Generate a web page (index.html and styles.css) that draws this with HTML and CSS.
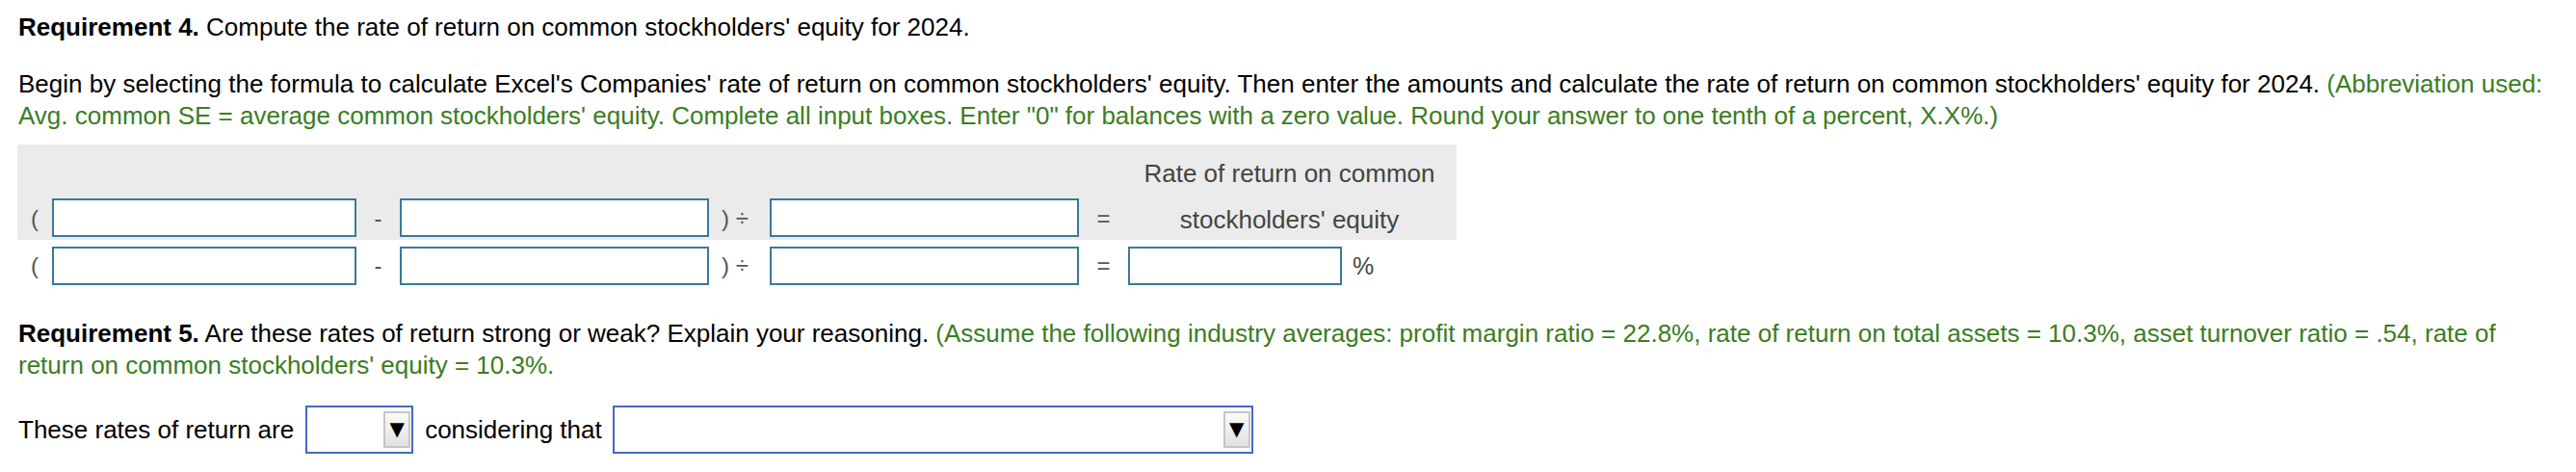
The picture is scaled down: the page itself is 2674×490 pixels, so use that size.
FILE: index.html
```html
<!DOCTYPE html>
<html>
<head>
<meta charset="utf-8">
<link rel="stylesheet" href="styles.css">
</head>
<body>
<div class="page">
  <p class="req"><b>Requirement 4.</b> Compute the rate of return on common stockholders' equity for 2024.</p>
  <p class="instr">Begin by selecting the formula to calculate Excel's Companies' rate of return on common stockholders' equity. Then enter the amounts and calculate the rate of return on common stockholders' equity for 2024. <span class="green">(Abbreviation used: Avg. common SE = average common stockholders' equity. Complete all input boxes. Enter "0" for balances with a zero value. Round your answer to one tenth of a percent, X.X%.)</span></p>

  <div class="formula">
    <div class="grid head">
      <div class="cell span7"></div>
      <div class="cell title top">Rate of return on common</div>
      <div class="cell op">(</div>
      <div class="cell"><div class="box"></div></div>
      <div class="cell op">-</div>
      <div class="cell"><div class="box"></div></div>
      <div class="cell op div">)&nbsp;÷</div>
      <div class="cell"><div class="box"></div></div>
      <div class="cell op">=</div>
      <div class="cell title">stockholders' equity</div>
    </div>
    <div class="grid body">
      <div class="cell op">(</div>
      <div class="cell"><div class="box"></div></div>
      <div class="cell op">-</div>
      <div class="cell"><div class="box"></div></div>
      <div class="cell op div">)&nbsp;÷</div>
      <div class="cell"><div class="box"></div></div>
      <div class="cell op">=</div>
      <div class="cell result"><div class="box small"></div><span class="pct">%</span></div>
    </div>
  </div>

  <p class="req req5"><b>Requirement 5.</b> Are these rates of return strong or weak? Explain your reasoning. <span class="green">(Assume the following industry averages: profit margin ratio = 22.8%, rate of return on total assets = 10.3%, asset turnover ratio = .54, rate of return on common stockholders' equity = 10.3%.</span></p>

  <div class="answer">
    <span>These rates of return are</span>
    <div class="select short"><span class="arrow">▼</span></div>
    <span>considering that</span>
    <div class="select long"><span class="arrow">▼</span></div>
  </div>
</div>
</body>
</html>
```

FILE: styles.css
```css
html, body {
  margin: 0;
  padding: 0;
  background: #ffffff;
}

.page {
  font-family: "Liberation Sans", Arial, Helvetica, sans-serif;
  font-size: 26px;
  line-height: 33px;
  color: #000000;
  padding: 12px 0 0 19px;
}

p {
  margin: 0;
}

.req b {
  font-weight: bold;
}

.instr {
  margin-top: 26px;
  width: 2640px;
}

.green {
  color: #3a7d22;
}

.formula {
  margin: 13px 0 0 -1px;
  width: 1494px;
}

.grid {
  display: grid;
  grid-template-columns: 36px 316px 45px 321px 63px 321px 51px 341px;
}

.head {
  background: #ebebeb;
  grid-template-rows: 50px 49px;
}

.body {
  grid-template-rows: 47px;
}

.cell {
  display: flex;
  align-items: center;
  justify-content: center;
}

.span7 {
  grid-column: 1 / span 7;
}

.head .cell {
  align-items: flex-end;
  padding-bottom: 3px;
}

.head .cell.span7 {
  padding: 0;
}

.body .cell {
  align-items: flex-start;
  padding-top: 7px;
}

.op {
  color: #555555;
  font-size: 24px;
}

.head .op, .body .op {
  padding-bottom: 6px;
}

.body .op {
  padding-top: 10px;
}

.div {
  justify-content: flex-start;
  padding-left: 13px;
}

.title {
  color: #444444;
  font-size: 26px;
  padding-right: 6px;
}

.head .title.top {
  padding-bottom: 3px;
}

.head .title {
  padding-bottom: 4px;
}

.box {
  width: 100%;
  height: 40px;
  box-sizing: border-box;
  border: 2px solid #387a9a;
  background: #ffffff;
}

.result {
  justify-content: flex-start;
}

.box.small {
  width: 222px;
  flex: none;
}

.pct {
  color: #444444;
  font-size: 25px;
  margin-left: 11px;
  line-height: 40px;
}

.req5 {
  margin-top: 34px;
  width: 2600px;
}

.answer {
  display: flex;
  align-items: center;
  margin-top: 25px;
  gap: 12px;
}

.select {
  box-sizing: border-box;
  height: 50px;
  border: 2px solid #4468c4;
  background: #ffffff;
  display: flex;
  justify-content: flex-end;
  align-items: center;
  padding-right: 1px;
}

.select.short {
  width: 112px;
}

.select.long {
  width: 665px;
  margin-left: -1px;
}

.arrow {
  box-sizing: border-box;
  width: 28px;
  height: 38px;
  border: 2px solid #c6c6c6;
  background: linear-gradient(#fafafa, #e2e2e2);
  color: #000000;
  font-size: 20px;
  line-height: 32px;
  text-align: center;
  font-family: "DejaVu Sans", sans-serif;
}
```
